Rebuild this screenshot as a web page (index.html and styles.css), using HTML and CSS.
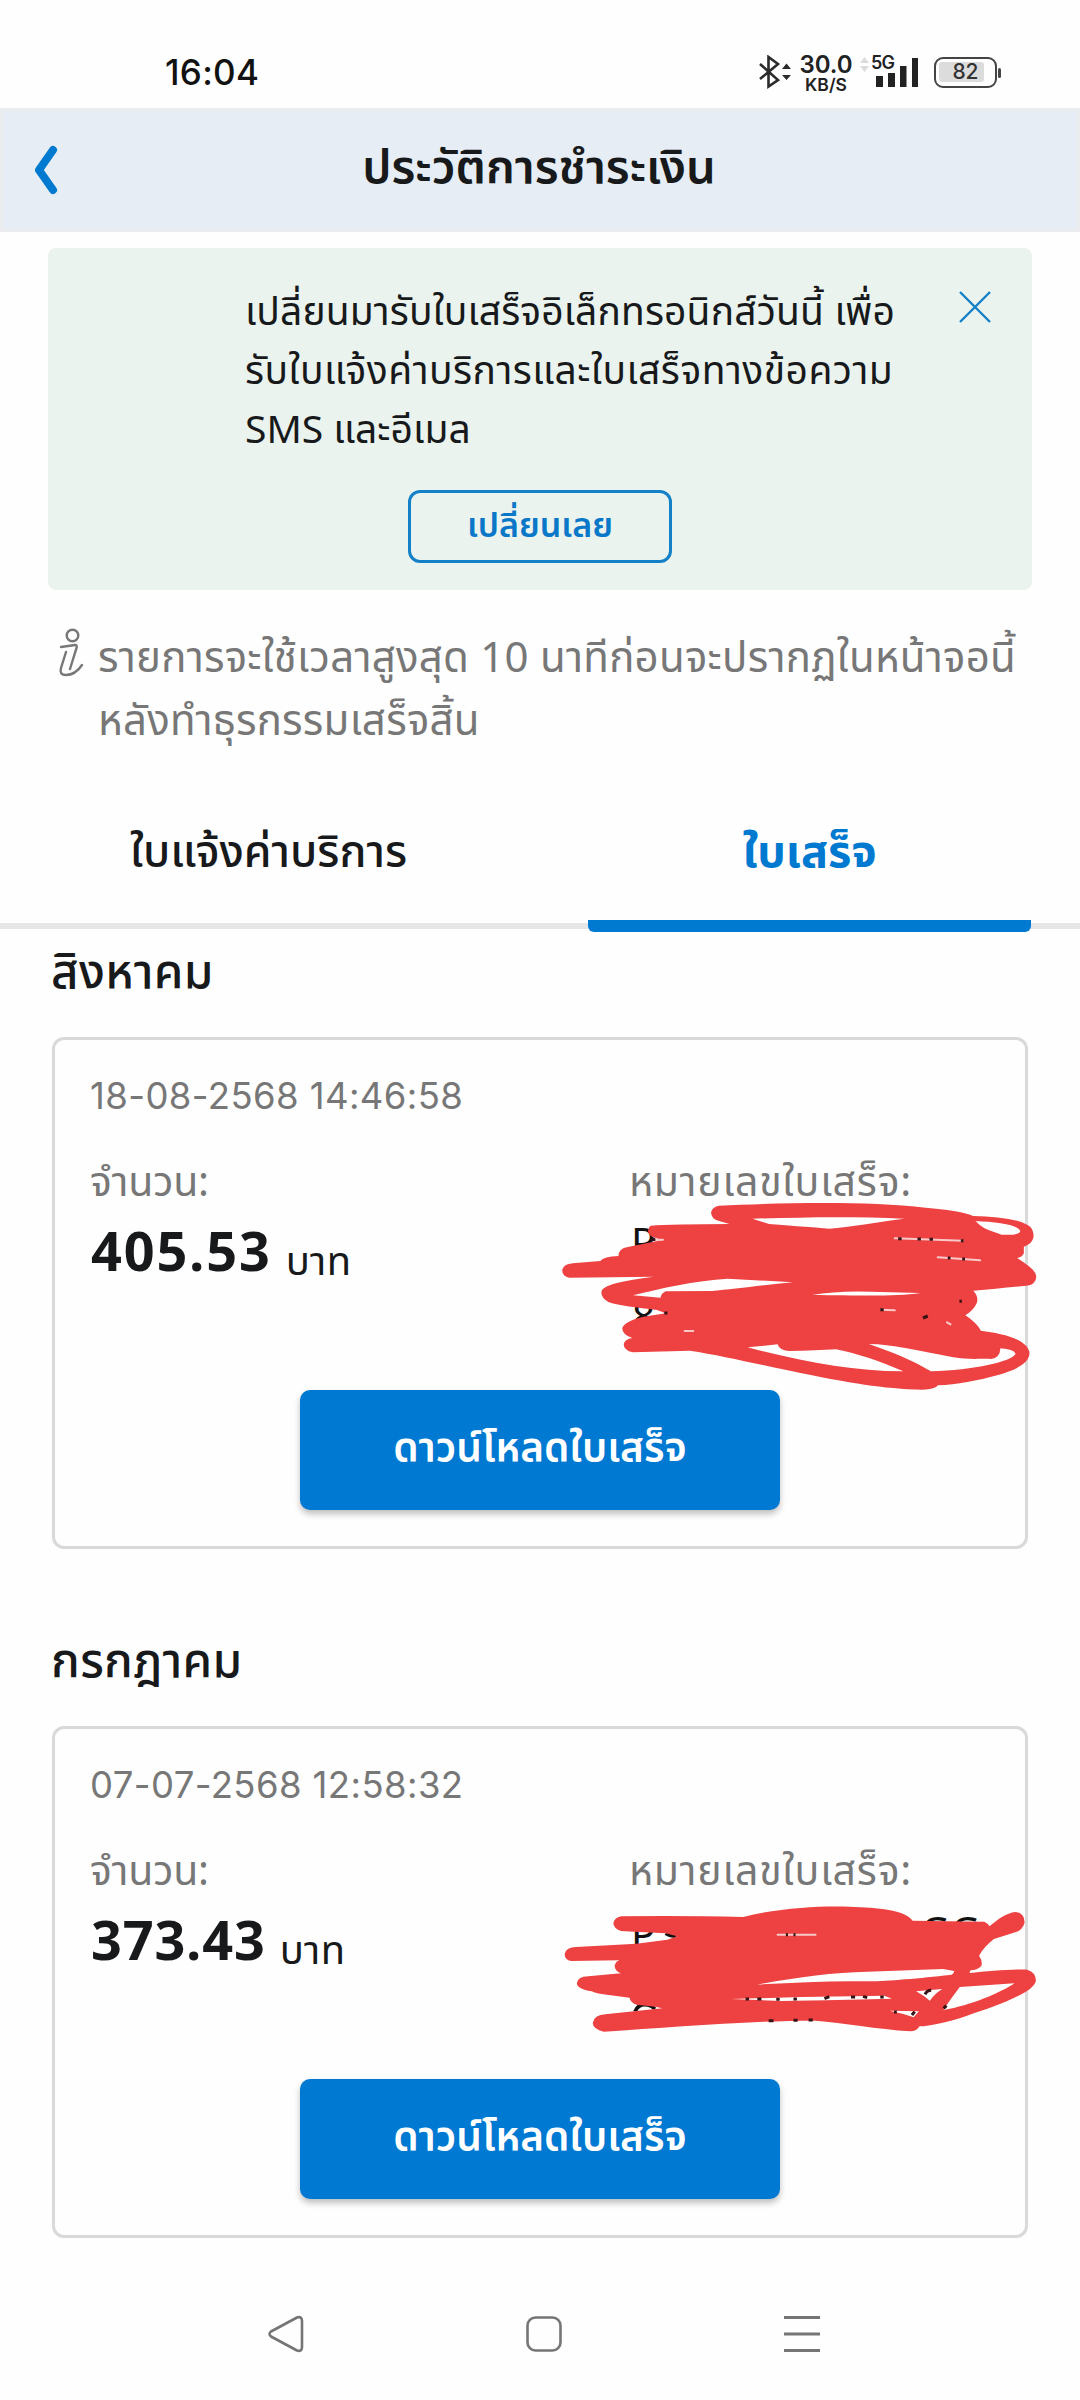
FILE: index.html
```html
<!DOCTYPE html>
<html lang="th">
<head>
<meta charset="utf-8">
<title>ประวัติการชำระเงิน</title>
<link rel="stylesheet" href="styles.css">
</head>
<body>
<div class="screen">
  <div class="status">
    <span class="clock">16:04</span>
    <div class="status-icons">
      <svg class="bluetooth" viewBox="0 0 34 34" width="34" height="34" fill="none" stroke="#2b2b2b" stroke-width="2.6"><path d="M2 9 L20 25 L10.500 31.500 V2 L20 9 L2 24"/><path d="M24 14 L28.500 8.500 L33 14Z M24 20 L28.500 25 L33 20Z" fill="#2b2b2b" stroke="none"/></svg>
      <div class="speed"><span class="speed-n">30.0</span><span class="speed-u">KB/S</span></div>
      <div class="signal">
        <svg viewBox="0 0 62 36" width="62" height="36"><path d="M1 9 L5.500 3 L10 9Z M1 12 L5.500 18 L10 12Z" fill="#dcdcdc"/><path d="M17 22h7v11h-7z M29 19h7v14h-7z M41 12h6.500v21h-6.500z M53 4h6v29h-6z" fill="#222"/></svg>
        <span class="net">5G</span>
      </div>
      <div class="battery"><span class="level">82</span></div>
    </div>
  </div>

  <header class="header">
    <svg class="back" viewBox="0 0 24 50" width="24" height="50" fill="none" stroke="#0079d0" stroke-width="8" stroke-linecap="round" stroke-linejoin="round"><path d="M19 5 L5 25 L19 45"/></svg>
    <h1 class="title"><span>ประวัติการชำระเงิน</span></h1>
  </header>

  <section class="banner">
    <svg class="close" viewBox="0 0 32 32" width="32" height="32" stroke="#1480c8" stroke-width="2.400"><path d="M1 1 L31 31 M31 1 L1 31"/></svg>
    <p class="banner-text"><span class="b1">เปลี่ยนมารับใบเสร็จอิเล็กทรอนิกส์วันนี้ เพื่อ</span><br><span class="b2">รับใบแจ้งค่าบริการและใบเสร็จทางข้อความ</span><br><span>SMS และอีเมล</span></p>
    <button class="switch"><span>เปลี่ยนเลย</span></button>
  </section>

  <div class="note">
    <svg class="info" viewBox="0 0 26 52" width="26" height="52" fill="none" stroke="#777" stroke-width="2.400" stroke-linecap="round"><circle cx="14.500" cy="7.500" r="5.800"/><path d="M3 19 L17 17 Q19.500 17 18.500 20 L12 41 M8 24 L3 40 Q1 47 8 47 C15 47 20 43 24 37"/></svg>
    <p class="note-text"><span>รายการจะใช้เวลาสูงสุด 10 นาทีก่อนจะปรากฏในหน้าจอนี้</span><br><span>หลังทำธุรกรรมเสร็จสิ้น</span></p>
  </div>

  <nav class="tabs">
    <div class="tab"><span>ใบแจ้งค่าบริการ</span></div>
    <div class="tab active"><span>ใบเสร็จ</span></div>
  </nav>

  <section class="month">
    <h2 class="month-name"><span>สิงหาคม</span></h2>
    <article class="card">
      <p class="date"><span>18-08-2568 14:46:58</span></p>
      <div class="cols">
        <div><p class="label"><span>จำนวน:</span></p><p class="amount"><b>405.53</b><span class="baht">บาท</span></p></div>
        <div><p class="label right"><span>หมายเลขใบเสร็จ:</span></p></div>
      </div>
      <button class="download"><span>ดาวน์โหลดใบเสร็จ</span></button>
      <svg class="scribble first" viewBox="0 0 1568 840" width="540" height="280" preserveAspectRatio="none">
        <g class="receipt-no"><text x="264" y="352">P</text><text x="267" y="574">8</text></g>
        <path class="ink" d="M520 197C700 188 950 182 1120 203C1180 208 1230 215 1258 228C1330 230 1400 238 1425 262C1440 285 1435 310 1405 320L1405 340Q1400 352 1385 354C1410 370 1440 390 1441 410Q1440 435 1412 437C1360 442 1310 448 1258 452Q1275 470 1268 490Q1258 512 1235 526C1255 540 1272 555 1280 572C1340 580 1410 595 1421 635C1425 670 1380 690 1330 705C1270 722 1210 734 1155 736Q1150 748 1110 749C1000 748 880 725 790 706C660 680 540 648 435 632L270 637Q243 632 243 612Q247 597 268 594Q238 583 239 565Q242 545 300 530L365 520L340 510C280 503 230 497 200 487Q172 470 180 450C195 432 240 422 330 410L85 413Q62 408 65 388Q70 372 95 370L175 363Q185 350 228 348Q228 325 255 321L355 300L325 290Q305 275 320 258Q330 253 550 252L520 243Q495 235 497 215Q502 200 520 197Z
        M617 236C750 232 900 228 1058 236C980 245 900 262 840 266Q740 258 665 252Z
        M1265 243C1320 246 1380 252 1393 270Q1400 280 1375 284L1340 284C1310 272 1285 268 1265 243Z
        M270 466C350 445 450 422 545 416L735 427C650 435 560 448 500 453L365 454Q352 460 350 473Z
        M790 465Q860 452 960 455L1105 459C1030 470 930 466 790 465Z
        M603 622L690 613Q695 632 725 633Q800 632 860 628C920 640 990 665 1055 694C920 695 760 665 603 622Z
        M955 612C1020 612 1100 632 1200 652C1240 660 1290 655 1310 657Q1335 655 1337 625Q1375 628 1381 641C1370 665 1260 690 1135 694C1080 660 1020 635 955 612Z"/>
        <path class="gap" d="M1030 295L1228 302M1155 352L1278 361M990 509L1030 511M335 299L357 299M1182 547L1192 553M420 573L445 573"/>
        <path class="mark" d="M1040 296h10M1096 297h10M1131 298h10M1222 302h8M1184 354h8M1226 357h8M988 509h10M1218 484h7M1112 534l14-6M323 300l12-2M361 519h9"/>
      </svg>
    </article>
  </section>

  <section class="month next">
    <h2 class="month-name"><span>กรกฎาคม</span></h2>
    <article class="card">
      <p class="date"><span>07-07-2568 12:58:32</span></p>
      <div class="cols">
        <div><p class="label"><span>จำนวน:</span></p><p class="amount tight"><b>373.43</b><span class="baht">บาท</span></p></div>
        <div><p class="label right"><span>หมายเลขใบเสร็จ:</span></p></div>
      </div>
      <button class="download"><span>ดาวน์โหลดใบเสร็จ</span></button>
      <svg class="scribble second" viewBox="0 0 1568 720" width="540" height="240" preserveAspectRatio="none">
        <g class="receipt-no"><text x="264" y="330">P</text><text x="1104" y="320">G</text><text x="1192" y="320">G</text></g>
        <path class="mark bold" d="M365 283Q378 292 396 292M276 518Q284 497 304 497Q324 497 333 510"/>
        <path class="ink" d="M235 232Q400 229 590 234C700 205 820 200 900 203C980 206 1060 212 1082 245L1290 248Q1303 255 1305 262C1330 240 1355 222 1380 219Q1408 222 1407 252Q1400 275 1380 280L1318 300C1300 315 1285 330 1275 350Q1285 365 1282 380Q1272 392 1250 394L1247 402C1300 397 1370 390 1415 392Q1440 400 1440 425C1435 460 1330 500 1240 530C1190 548 1130 562 1102 562Q1095 577 1075 577C980 570 880 552 800 545C600 545 380 565 185 578Q155 572 153 552Q157 528 190 526L355 508L335 503L280 497Q262 490 260 476L200 468Q165 465 150 457Q107 450 107 432Q110 413 140 412L235 403Q215 395 217 378Q220 368 230 364L90 366Q70 362 72 344Q76 325 105 324L280 314L370 302L398 292L365 283L275 278L235 276Q213 268 213 252Q217 236 235 232Z
        M630 437C740 415 850 400 950 398L1170 390L1203 396Q1200 408 1190 408C1100 418 1000 428 950 427C850 425 740 430 630 437Z
        M1219 444L1378 433C1340 460 1250 500 1172 513Q1185 490 1219 444Z
        M1092 457L1168 450Q1145 465 1132 485Q1115 470 1092 457Z
        M555 480L760 474L1000 470L1022 479L830 484L700 486Z
        M1015 515L1100 517L1085 535Q1060 525 1015 515Z"/>
        <path class="gap" d="M690 287H800"/>
        <path class="mark" d="M597 480h10M631 480h12M686 481h10M736 480h10M826 479l14-6M903 474h12M938 472l12 4M988 474h10M714 287h6M736 287h6M1028 519h8M1080 528l8-10M1172 508l8-8M1118 466q6-12 18-12M664 545h14M736 544h12M780 543h12"/>
      </svg>
    </article>
  </section>

  <footer class="navbar">
    <svg viewBox="0 0 36 38" width="36" height="38" fill="none" stroke="#757575" stroke-width="2.600" stroke-linejoin="round"><path d="M3 16.500 L29 2.500 Q34 1 34 6 V32 Q34 37 29 35.500 L3 21.500 Q0 19 3 16.500Z"/></svg>
    <svg viewBox="0 0 36 38" width="36" height="38" fill="none" stroke="#757575" stroke-width="2.600"><rect x="1.500" y="2.500" width="33" height="33" rx="8"/></svg>
    <svg viewBox="0 0 36 38" width="36" height="38" stroke="#757575" stroke-width="3.200"><path d="M0 2.500H36 M0 19H36 M0 35.500H36"/></svg>
  </footer>
</div>
</body>
</html>
```
FILE: styles.css
```css
* { box-sizing: border-box; }
body { margin: 0; background: #fefefe; color: #17191b; font-family: "Noto Sans Thai", "Noto Sans", sans-serif; }
p, h1, h2 { margin: 0; }
button { font-family: inherit; padding: 0; display: block; }
span, b { white-space: nowrap; }
.screen { width: 1080px; height: 2400px; overflow: hidden; }

.status { height: 108px; display: flex; justify-content: space-between; padding: 50px 78px 0 165px; }
.clock { font: 500 35px/44px Inter, sans-serif; color: #111; letter-spacing: .3px; }
.status-icons { display: flex; align-items: flex-start; font-family: Inter, sans-serif; color: #222; }
.bluetooth { margin-top: 5px; }
.speed { display: flex; flex-direction: column; align-items: center; width: 52px; margin-left: 8px; }
.speed-n { font-size: 24px; font-weight: 600; line-height: 24px; margin-top: 3px; }
.speed-u { font-size: 17.500px; font-weight: 600; line-height: 16px; }
.signal { position: relative; height: 40px; margin: 4px 0 0 7px; }
.net { position: absolute; left: 12px; top: 0; font-size: 18px; font-weight: 600; line-height: 18px; letter-spacing: -.8px; }
.battery { position: relative; width: 63px; height: 31px; margin: 7px 5px 0 13px; border: 2.500px solid #444; border-radius: 9px; padding: 3px; }
.battery::after { content: ""; position: absolute; right: -6px; top: 9px; width: 3px; height: 10px; background: #444; border-radius: 2px; }
.level { display: block; width: 45px; height: 20px; background: #dcdcdc; border-radius: 3px; font-size: 21px; font-weight: 500; line-height: 20px; text-align: center; color: #333; padding-left: 8px; }

.header { height: 124px; background: #e6edf4; border: 3px solid #ebecee; display: flex; align-items: center; }
.back { margin: -1px 0 0 31px; }
.title { flex: 1; text-align: center; padding-right: 57px; font-size: 47px; font-weight: 600; line-height: 60px; margin-top: -2px; }

.banner { position: relative; margin: 16px 48px 0; height: 342px; border-radius: 8px; background: #ebf3ee; padding: 36px 0 0 197px; }
.close { position: absolute; right: 41px; top: 43px; }
.banner-text { font-size: 39px; line-height: 59px; }
.b1 { letter-spacing: .15px; }
.b2 { letter-spacing: .5px; }
.switch { width: 264px; height: 73px; margin: 29px 0 0 163px; border: 3px solid #1480c8; border-radius: 12px; background: none; color: #0a78c8; font-size: 34px; font-weight: 600; line-height: 64px; }

.note { display: flex; margin: 38px 0 0 58px; color: #777; }
.info { margin-right: 14px; }
.note-text { font-size: 42px; line-height: 63px; letter-spacing: .25px; }

.tabs { height: 178px; display: grid; grid-template-columns: 439px 443px; padding: 70px 49px 0; column-gap: 100px; background: linear-gradient(#e6e6e6, #e6e6e6) 0 169px / 100% 6px no-repeat; }
.tab { height: 108px; text-align: center; font-size: 44.500px; line-height: 60px; font-weight: 500; }
.active { border-bottom: 12px solid #0079d0; border-radius: 6px; color: #0079d0; font-weight: 700; line-height: 58px; font-size: 45px; }

.month { padding: 12px 52px 0; }
.next { padding-top: 84px; }
.month-name { font-size: 47.500px; font-weight: 500; line-height: 60px; letter-spacing: .3px; text-indent: -1px; }
.card { position: relative; height: 512px; margin-top: 33px; border: 3px solid #d9d9d9; border-radius: 12px; padding: 34px 0 0 36px; }
.date { font: 400 36.500px/44px Inter, sans-serif; color: #777; letter-spacing: .4px; text-indent: -1px; }
.cols { display: grid; grid-template-columns: 540px 1fr; margin-top: 40px; }
.label { font-size: 41px; line-height: 50px; color: #777; text-indent: -1px; letter-spacing: -.2px; }
.right { letter-spacing: .8px; text-indent: -2px; }
.amount { display: flex; margin-top: 15px; height: 64px; line-height: 64px; }
.amount b { font-size: 54px; letter-spacing: 1.800px; }
.baht { font-size: 40px; padding-top: 8px; margin-left: 14px; letter-spacing: .3px; }
.tight b { letter-spacing: .8px; }
.download { width: 480px; height: 120px; margin: 103px 0 0 209px; border: 0; border-radius: 10px; background: #0079d3; box-shadow: 0 4px 6px rgba(0,0,0,.25); color: #fff; font-size: 40.500px; font-weight: 600; line-height: 116px; }

.scribble { position: absolute; left: 485px; }
.first { top: 100px; }
.second { top: 110px; }
.ink { fill: #ee4141; fill-rule: evenodd; }
.gap { fill: none; stroke: #f9c9c9; stroke-width: 6; stroke-linecap: round; }
.mark { fill: none; stroke: #351214; stroke-width: 9; }
.bold { stroke: #111; stroke-width: 11; }
.receipt-no { font-size: 118px; fill: #111; }

.navbar { display: flex; gap: 222px; padding: 77px 0 0 268px; }
.navbar svg { flex: none; }
```
